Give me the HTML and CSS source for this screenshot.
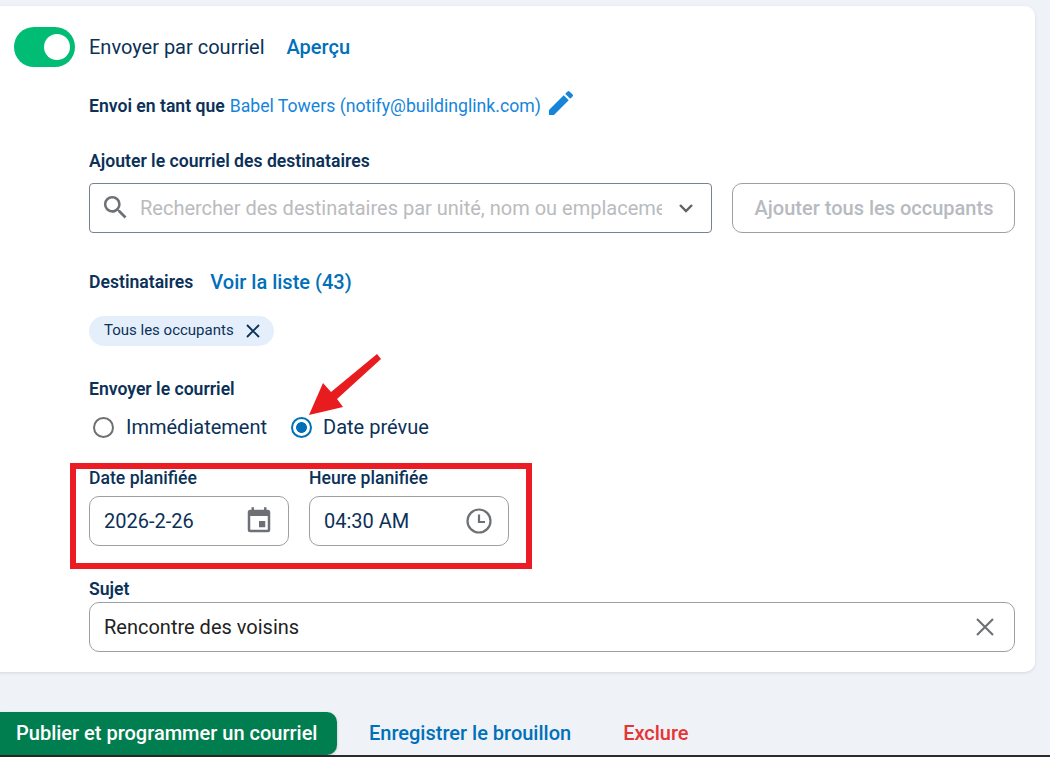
FILE: index.html
```html
<!DOCTYPE html>
<html lang="fr">
<head>
<meta charset="utf-8">
<title>Envoyer par courriel</title>
<link rel="stylesheet" href="styles.css">
</head>
<body>
<div class="page">
  <main class="card">
    <div class="toggle-row">
      <span class="toggle"><span class="knob"></span></span>
      <span class="toggle-label">Envoyer par courriel</span>
      <a class="link preview">Aperçu</a>
    </div>
    <div class="content">
      <div class="sender">
        <span class="label">Envoi en tant que</span>
        <a class="sender-link">Babel Towers (notify@buildinglink.com)</a>
        <svg class="pencil" viewBox="0 0 24 24"><path d="M3 17.25V21h3.75L17.81 9.94l-3.75-3.75L3 17.25zM20.71 7.04a1 1 0 0 0 0-1.41l-2.34-2.34a1 1 0 0 0-1.41 0l-1.83 1.83 3.75 3.75 1.83-1.83z"/></svg>
      </div>
      <div class="label add-label">Ajouter le courriel des destinataires</div>
      <div class="add-row">
        <div class="field search">
          <svg class="search-icon" viewBox="0 0 24 24"><path d="M15.5 14h-.79l-.28-.27A6.47 6.47 0 0 0 16 9.5 6.5 6.5 0 1 0 9.5 16c1.61 0 3.09-.59 4.23-1.57l.27.28v.79l5 4.99L20.49 19l-4.99-5zm-6 0C7.01 14 5 11.99 5 9.5S7.01 5 9.5 5 14 7.01 14 9.5 11.99 14 9.5 14z"/></svg>
          <span class="placeholder">Rechercher des destinataires par unité, nom ou emplacement</span>
          <svg class="chevron" viewBox="0 0 16 10"><path d="M2 2l6 6 6-6"/></svg>
        </div>
        <div class="add-all">Ajouter tous les occupants</div>
      </div>
      <div class="recipients">
        <span class="label">Destinataires</span>
        <a class="link">Voir la liste (43)</a>
      </div>
      <div class="chip-row">
        <span class="chip"><span class="chip-text">Tous les occupants</span>
          <svg class="chip-x" viewBox="0 0 14 14"><path d="M1 1l12 12M13 1L1 13"/></svg>
        </span>
      </div>
      <div class="label send-label">Envoyer le courriel</div>
      <div class="radios">
        <span class="radio"><span class="dot"></span>Immédiatement</span>
        <span class="radio checked"><span class="dot"></span>Date prévue</span>
      </div>
      <div class="schedule">
        <div class="sched-col">
          <div class="label-light">Date planifiée</div>
          <div class="field rounded small">
            <span class="value">2026-2-26</span>
            <svg class="cal" viewBox="0 0 24 24"><path d="M17 12h-5v5h5v-5zM16 1v2H8V1H6v2H5a2 2 0 0 0-2 2v14a2 2 0 0 0 2 2h14a2 2 0 0 0 2-2V5a2 2 0 0 0-2-2h-1V1h-2zm3 18H5V8h14v11z"/></svg>
          </div>
        </div>
        <div class="sched-col">
          <div class="label-light">Heure planifiée</div>
          <div class="field rounded small">
            <span class="value">04:30 AM</span>
            <svg class="clock" viewBox="0 0 26 26"><circle cx="13" cy="13" r="11.5"/><path d="M13 6.5V14h6"/></svg>
          </div>
        </div>
      </div>
      <div class="label subject-label">Sujet</div>
      <div class="field rounded subject">
        <span class="subject-value">Rencontre des voisins</span>
        <svg class="clear" viewBox="0 0 18 18"><path d="M1 1l16 16M17 1L1 17"/></svg>
      </div>
    </div>
  </main>
  <div class="actions">
    <button class="publish">Publier et programmer un courriel</button>
    <a class="link draft">Enregistrer le brouillon</a>
    <a class="exclude">Exclure</a>
  </div>
  <div class="screen-edge"></div>
  <div class="annot-box"></div>
  <svg class="annot-arrow" viewBox="0 0 80 66"><path d="M71 3L75 8 31 48 37 56 3 64 17 32 25 41z"/></svg>
</div>
</body>
</html>
```
FILE: styles.css
```css
* { box-sizing: border-box; }
html, body { margin: 0; padding: 0; }
body {
  font-family: Roboto, "Liberation Sans", sans-serif;
  background: #eff3f8;
  color: #0b3158;
}
.page {
  position: relative;
  width: 1050px;
  height: 757px;
  overflow: hidden;
  padding-top: 6px;
}
.card {
  width: 1055px;
  height: 666px;
  margin-left: -20px;
  padding: 21px 0 0 34px;
  background: #fff;
  border-radius: 10px;
  box-shadow: 0 1px 3px rgba(30, 50, 80, .14);
}
.toggle-row { display: flex; align-items: center; height: 40px; }
.toggle {
  display: flex;
  align-items: center;
  justify-content: flex-end;
  width: 61px;
  height: 40px;
  padding-right: 5px;
  border-radius: 20px;
  background: #00bc75;
}
.knob { width: 26px; height: 26px; border-radius: 50%; background: #fff; }
.toggle-label { margin-left: 14px; font-size: 20px; line-height: 24px; padding-bottom: 1px; }
.link { color: #0070b8; font-weight: 500; font-size: 20px; }
.preview { margin-left: 22px; line-height: 24px; padding-bottom: 1px; }
.content { padding-left: 55px; margin-left: 20px; width: 981px; }
.label { font-size: 17.6px; font-weight: 600; color: #0b3158; }
.sender { display: flex; align-items: center; height: 26px; margin-top: 26px; }
.sender-link { margin-left: 5px; font-size: 17.65px; color: #1585dc; }
.pencil { width: 32px; height: 32px; margin: -6px 0 0 4px; fill: #1585dc; }
.add-label { margin-top: 30px; line-height: 24px; }
.add-row { display: flex; gap: 20px; margin-top: 10px; }
.field {
  display: flex;
  align-items: center;
  height: 50px;
  border: 1px solid #76838f;
  border-radius: 4px;
  background: #fff;
}
.search { width: 623px; padding: 0 17px 0 10px; }
.search-icon { flex: none; width: 31px; height: 31px; fill: #6d7074; margin-top: -2px; }
.placeholder {
  flex: 1;
  margin-left: 9px;
  overflow: hidden;
  white-space: nowrap;
  font-size: 20px;
  color: #b9bbbe;
}
.chevron { flex: none; width: 16px; height: 10px; margin-left: 16px; fill: none; stroke: #5f6368; stroke-width: 2.4; }
.add-all {
  display: flex;
  align-items: center;
  justify-content: center;
  width: 283px;
  height: 50px;
  padding-left: 1px;
  border: 1px solid #9d9fa3;
  border-radius: 10px;
  font-size: 20px;
  font-weight: 500;
  color: #b7babf;
}
.recipients { display: flex; align-items: center; gap: 17px; height: 26px; margin-top: 36px; }
.chip-row { display: flex; margin-top: 21px; }
.chip {
  display: flex;
  align-items: center;
  width: 185px;
  height: 30px;
  padding-left: 15px;
  border-radius: 15px;
  background: #e5effb;
  font-size: 15px;
  color: #0b3158;
}
.chip-text { margin-top: -2px; }
.chip-x { width: 14px; height: 14px; margin-left: 12px; fill: none; stroke: #0b3158; stroke-width: 1.9; }
.send-label { margin-top: 31px; line-height: 24px; }
.radios { display: flex; gap: 24px; margin-top: 13px; height: 26px; padding-left: 4px; }
.radio { display: flex; align-items: center; font-size: 20px; color: #0b3158; }
.dot {
  width: 21px;
  height: 21px;
  margin-right: 12px;
  border: 2px solid #6f6f6f;
  border-radius: 50%;
}
.radio.checked .dot {
  margin-right: 11px;
  border: 2.5px solid #0070b8;
  background: radial-gradient(circle, #0070b8 0 5px, #fff 5.8px);
}
.schedule { display: flex; gap: 20px; margin-top: 27px; }
.sched-col { width: 200px; }
.label-light { font-size: 17.6px; font-weight: 500; line-height: 24px; height: 30px; margin-top: -1px; }
.rounded { border-radius: 10px; border-color: #9d9fa3; }
.small { padding: 0 16px 0 14px; justify-content: space-between; }
.value { font-size: 20px; color: #0b3158; }
.cal { width: 30px; height: 30px; fill: #6d7074; margin-right: -2px; }
.clock { width: 26px; height: 26px; fill: none; stroke: #6d7074; stroke-width: 2.2; }
.subject-label { margin-top: 31px; line-height: 24px; height: 25px; }
.subject { width: 926px; padding: 0 20px 0 14px; justify-content: space-between; }
.subject-value { font-size: 20px; color: #222; }
.clear { width: 18px; height: 18px; fill: none; stroke: #6d7074; stroke-width: 2.1; }
.actions { display: flex; align-items: center; height: 43px; margin-top: 40px; padding-bottom: 2px; }
.publish {
  align-self: flex-start;
  flex: none;
  width: 337px;
  height: 43px;
  padding: 0 0 2px 16px;
  border: 0;
  border-radius: 0 10px 10px 0;
  background: #017e50;
  color: #fff;
  font: 500 20px Roboto, "Liberation Sans", sans-serif;
  text-align: left;
  box-shadow: 0 1px 3px rgba(0, 0, 0, .2);
}
.draft { margin-left: 32px; }
.exclude { margin-left: 52px; font-size: 20px; font-weight: 500; color: #e53535; }
.screen-edge { height: 2px; background: #2c2a2a; }
.annot-box {
  position: absolute;
  left: 70px;
  top: 463px;
  width: 462px;
  height: 106px;
  border: 6px solid #ec1c24;
}
.annot-arrow { position: absolute; left: 306px; top: 351px; width: 80px; height: 66px; fill: #e81c1f; }
```
